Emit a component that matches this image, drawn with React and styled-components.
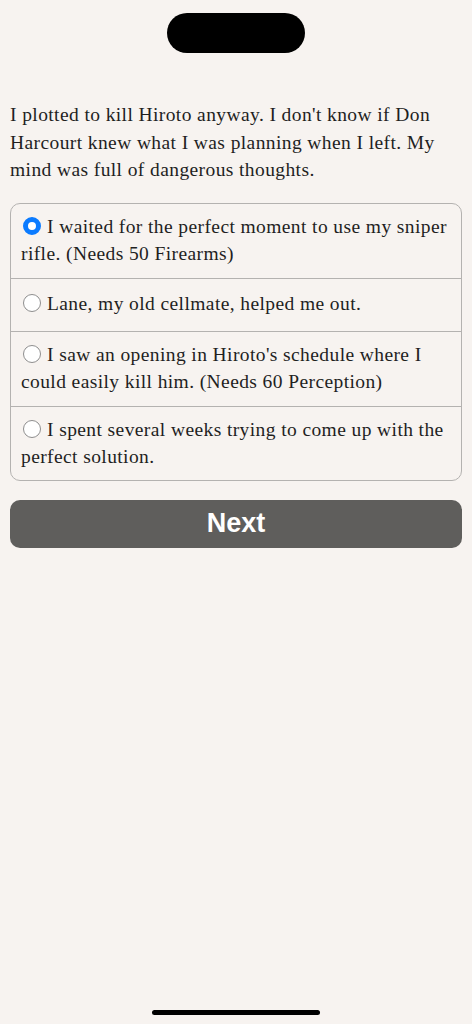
import styled, { createGlobalStyle } from "styled-components";

const GlobalStyle = createGlobalStyle`
  html, body {
    margin: 0;
    padding: 0;
    background: #f7f3f0;
  }
  * {
    box-sizing: border-box;
  }
`;

const Screen = styled.div`
  width: 472px;
  height: 1024px;
  background: #f7f3f0;
  display: flex;
  flex-direction: column;
  padding: 0 10px;
  font-family: "Liberation Serif", "Times New Roman", serif;
  color: #1f1f1f;
`;

const Notch = styled.div`
  align-self: center;
  width: 138px;
  height: 40px;
  margin-top: 13px;
  border-radius: 20px;
  background: #000;
`;

const Story = styled.p`
  margin: 48px 0 0;
  font-size: 19.5px;
  line-height: 27.5px;
  letter-spacing: 0.4px;
`;

const Options = styled.div`
  margin-top: 19px;
  border: 1px solid #b4b2b0;
  border-radius: 10px;
  overflow: hidden;
`;

const Option = styled.label`
  display: flex;
  align-items: center;
  min-height: 53px;
  padding: 9px 10px ${(p) => (p.$last ? "9px" : "10px")} 10px;
  font-size: 19.5px;
  line-height: 27.5px;
  letter-spacing: 0.4px;
  border-top: ${(p) => (p.$first ? "none" : "1px solid #b4b2b0")};
`;

const Radio = styled.span`
  display: inline-block;
  width: 18px;
  height: 18px;
  margin: 0 6px 0 2px;
  vertical-align: -2px;
  border-radius: 50%;
  border: ${(p) => (p.$checked ? "5px solid #0b7bff" : "1.5px solid #8e8e8e")};
  background: #fff;
`;

const NextButton = styled.button`
  margin-top: 19px;
  height: 48px;
  width: 100%;
  border: none;
  border-radius: 10px;
  background: #5f5e5c;
  color: #fff;
  font-family: "Liberation Sans", Arial, sans-serif;
  font-weight: bold;
  font-size: 27px;
  cursor: pointer;
`;

const Spacer = styled.div`
  flex: 1;
`;

const HomeBar = styled.div`
  align-self: center;
  width: 168px;
  height: 5px;
  border-radius: 3px;
  background: #000;
  margin-bottom: 9px;
`;

const choices = [
  "I waited for the perfect moment to use my sniper rifle. (Needs 50 Firearms)",
  "Lane, my old cellmate, helped me out.",
  "I saw an opening in Hiroto's schedule where I could easily kill him. (Needs 60 Perception)",
  "I spent several weeks trying to come up with the perfect solution.",
];

export default function App() {
  const selected = 0;
  return (
    <>
      <GlobalStyle />
      <Screen>
        <Notch />
        <Story>
          I plotted to kill Hiroto anyway. I don't know if Don Harcourt knew
          what I was planning when I left. My mind was full of dangerous
          thoughts.
        </Story>
        <Options>
          {choices.map((text, i) => (
            <Option key={i} $first={i === 0} $last={i === choices.length - 1}>
              <span>
                <Radio $checked={i === selected} />
                {text}
              </span>
            </Option>
          ))}
        </Options>
        <NextButton>Next</NextButton>
        <Spacer />
        <HomeBar />
      </Screen>
    </>
  );
}
